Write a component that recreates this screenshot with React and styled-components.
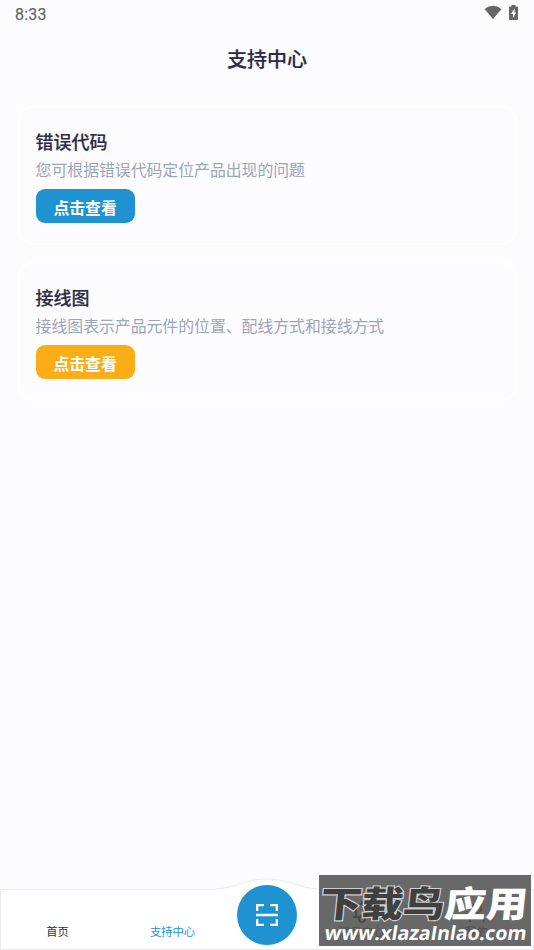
import React from "react";
import styled, { createGlobalStyle } from "styled-components";

const entries = [
  {
    title: "错误代码",
    description: "您可根据错误代码定位产品出现的问题",
    color: "#1f93d2",
  },
  {
    title: "接线图",
    description: "接线图表示产品元件的位置、配线方式和接线方式",
    color: "#fbad18",
  },
];

export default function App() {
  return (
    <Screen>
      <GlobalStyle />
      <StatusBar>
        <span>8:33</span>
        <StatusIcons>
          <WifiIcon />
          <BatteryIcon />
        </StatusIcons>
      </StatusBar>
      <Header>支持中心</Header>
      <CardList>
        {entries.map((entry) => (
          <Card key={entry.title}>
            <CardTitle>{entry.title}</CardTitle>
            <CardText>{entry.description}</CardText>
            <CardButton $color={entry.color}>点击查看</CardButton>
          </Card>
        ))}
      </CardList>
      <TabBar>
        <TabBarShape />
        <Tab>首页</Tab>
        <Tab $active>支持中心</Tab>
        <ScanButton>
          <ScanIcon />
        </ScanButton>
        <Tab>
          <BellIcon />
          消息中心
        </Tab>
        <Tab>
          <UserIcon />
          我的
        </Tab>
      </TabBar>
      <Watermark>
        <WatermarkName>
          <Outlined>下载鸟</Outlined>
          <Solid>应用</Solid>
        </WatermarkName>
        <WatermarkUrl>www.xlazaInlao.com</WatermarkUrl>
      </Watermark>
    </Screen>
  );
}

function WifiIcon() {
  return (
    <svg width="18" height="14" viewBox="0 0 18 14">
      <path d="M0.5 4 Q9 -2.6 17.5 4 L9 14 Z" fill="#666667" />
    </svg>
  );
}

function BatteryIcon() {
  return (
    <svg width="9" height="15" viewBox="0 0 9 15">
      <path d="M2.5 0h4v1.5H8q1 0 1 1V14q0 1-1 1H1q-1 0-1-1V2.5q0-1 1-1h1.5z" fill="#666667" />
      <path d="M5.5 3.5L2 9h2v4l3.2-5.5H5.5z" fill="#fff" />
    </svg>
  );
}

function ScanIcon() {
  return (
    <svg width="24" height="24" viewBox="0 0 24 24" fill="none" stroke="#fff" strokeWidth="2.3">
      <path d="M2.2 8V2.2H9M15 2.2h6.8V8M2.2 16v5.800H9M15 21.8h6.800V16M1 12h22" />
    </svg>
  );
}

function BellIcon() {
  return (
    <svg width="20" height="22" viewBox="0 0 20 22" fill="none" stroke="#111" strokeWidth="2">
      <path d="M4 15V8q0-5 6-5t6 5v7M1 16h18M10 0v3" />
      <circle cx="10" cy="18" r="3" />
    </svg>
  );
}

function UserIcon() {
  return (
    <svg width="20" height="22" viewBox="0 0 20 22" fill="none" stroke="#333" strokeWidth="1.5">
      <circle cx="10" cy="7" r="4.5" />
      <path d="M3 21q0-6 7-6t7 6" />
    </svg>
  );
}

function TabBarShape() {
  return (
    <ShapeSvg width="534" height="72" viewBox="0 0 534 72">
      <path
        d="M0.5 11.5H205C238 11.5 243 1 267 1S296 11.5 329 11.5H533.5V71.5H0.5Z"
        fill="#fff"
        stroke="#ebebef"
      />
    </ShapeSvg>
  );
}

const GlobalStyle = createGlobalStyle`
  body {
    margin: 0;
    background: #fcfcfe;
    font-family: Roboto, "Noto Sans CJK SC", sans-serif;
  }
`;
const Screen = styled.div`
  position: relative;
  display: flex;
  flex-direction: column;
  width: 534px;
  height: 950px;
  overflow: hidden;
`;
const StatusBar = styled.div`
  display: flex;
  justify-content: space-between;
  box-sizing: border-box;
  height: 28px;
  padding: 5px 16px 0 15px;
  color: #666667;
  font-size: 16px;
  letter-spacing: 0.2px;
  line-height: 19px;
  -webkit-text-stroke: 0.2px #666667;
`;
const StatusIcons = styled.div`
  display: flex;
  gap: 7px;
`;
const Header = styled.h1`
  margin: 0;
  height: 60px;
  color: #2d2b45;
  font-size: 20px;
  font-weight: 500;
  line-height: 64px;
  text-align: center;
  -webkit-text-stroke: 0.2px #2d2b45;
`;
const CardList = styled.div`
  display: flex;
  flex: 1;
  flex-direction: column;
  gap: 17px;
  padding: 18px 17px 0 18px;
`;
const Card = styled.section`
  box-sizing: border-box;
  height: 139px;
  padding: 21px 15.6px;
  border: 2px solid #fefeff;
  border-radius: 15px;
`;
const CardTitle = styled.h2`
  margin: 0;
  color: #2d2b45;
  font-size: 18px;
  font-weight: 500;
  line-height: 27px;
  -webkit-text-stroke: 0.2px #2d2b45;
`;
const CardText = styled.p`
  margin: 0;
  color: #9ba6b7;
  font-size: 15.85px;
  line-height: 29px;
`;
const CardButton = styled.button`
  display: block;
  width: 99px;
  height: 34px;
  margin-top: 4px;
  padding: 3px 0 0;
  border: 0;
  border-radius: 9px;
  background: ${(props) => props.$color};
  color: #fff;
  font-family: inherit;
  font-size: 15.85px;
  font-weight: 700;
`;
const TabBar = styled.nav`
  position: relative;
  display: grid;
  grid-template-columns: 115px 115px 74px 115px 115px;
  height: 72px;
`;
const ShapeSvg = styled.svg`
  position: absolute;
  inset: 0;
`;
const Tab = styled.div`
  position: relative;
  display: flex;
  flex-direction: column;
  align-items: center;
  justify-content: flex-end;
  gap: 2px;
  padding-bottom: 9px;
  color: ${(props) => (props.$active ? "#1f93d2" : "#333")};
  font-size: 11.3px;
  line-height: 16px;
`;
const ScanButton = styled.div`
  position: relative;
  display: flex;
  align-items: center;
  justify-content: center;
  justify-self: center;
  width: 60px;
  height: 60px;
  margin-top: 7px;
  border-radius: 50%;
  background: #1f93d2;
`;
const Watermark = styled.div`
  position: absolute;
  right: 3px;
  bottom: 4px;
  width: 212px;
  height: 71px;
  background: rgba(82, 82, 82, 0.87);
  white-space: nowrap;
`;
const WatermarkName = styled.div`
  display: flex;
  height: 46px;
  padding-left: 2px;
  font-size: 41.5px;
  font-weight: 900;
  line-height: 62px;
  transform: scaleY(0.86) skewX(-5deg);
`;
const Outlined = styled.span`
  color: #404040;
  -webkit-text-stroke: 2.6px #d0d0d0;
  paint-order: stroke fill;
`;
const Solid = styled.span`
  color: #fff;
`;
const WatermarkUrl = styled.div`
  padding-left: 6px;
  color: #fff;
  font-family: "Open Sans", sans-serif;
  font-size: 19.5px;
  font-weight: 700;
  line-height: 23px;
  transform: skewX(-9deg);
`;
